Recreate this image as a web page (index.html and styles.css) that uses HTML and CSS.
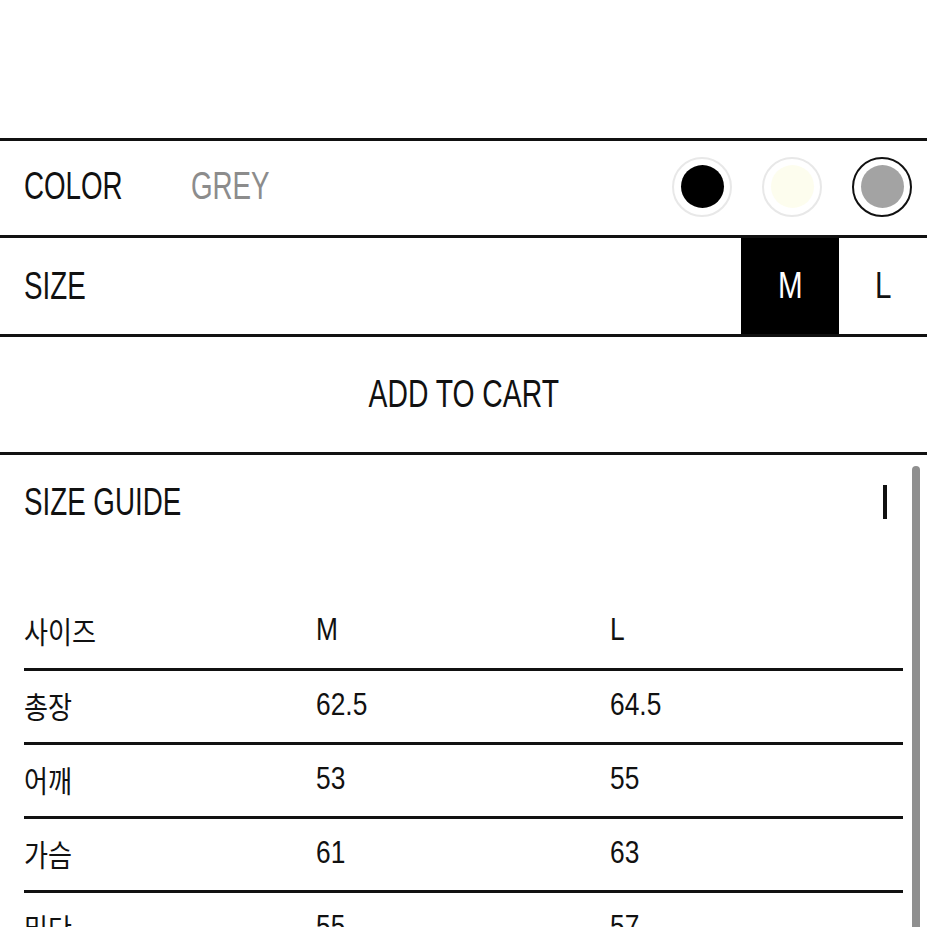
FILE: index.html
```html
<!DOCTYPE html>
<html lang="ko">
<head>
  <meta charset="UTF-8">
  <meta name="viewport" content="width=device-width, initial-scale=1.0">
  <title>Product Options</title>
  <link rel="stylesheet" href="styles.css">
</head>
<body>
  <div class="top-space"></div>

  <div class="options">
    <div class="option-row">
      <span class="label"><span class="narrow">COLOR</span></span>
      <span class="value"><span class="narrow">GREY</span></span>
      <div class="swatches">
        <button class="swatch"><span class="dot dot-black"></span></button>
        <button class="swatch"><span class="dot dot-cream"></span></button>
        <button class="swatch selected"><span class="dot dot-grey"></span></button>
      </div>
    </div>
    <div class="option-row size-row">
      <span class="label"><span class="narrow">SIZE</span></span>
      <div class="sizes">
        <button class="size active"><span class="narrow mid">M</span></button>
        <button class="size"><span class="narrow mid">L</span></button>
      </div>
    </div>
  </div>

  <button class="add-cart"><span class="narrow mid">ADD TO CART</span></button>

  <section class="guide">
    <div class="guide-head">
      <h2 class="guide-title"><span class="narrow">SIZE GUIDE</span></h2>
      <span class="toggle"></span>
    </div>
    <div class="guide-table">
      <div class="guide-row head">
        <span class="cell name">사이즈</span><span class="cell">M</span><span class="cell">L</span>
      </div>
      <div class="guide-row">
        <span class="cell name">총장</span><span class="cell">62.5</span><span class="cell">64.5</span>
      </div>
      <div class="guide-row">
        <span class="cell name">어깨</span><span class="cell">53</span><span class="cell">55</span>
      </div>
      <div class="guide-row">
        <span class="cell name">가슴</span><span class="cell">61</span><span class="cell">63</span>
      </div>
      <div class="guide-row">
        <span class="cell name">밑단</span><span class="cell">55</span><span class="cell">57</span>
      </div>
    </div>
  </section>

  <div class="scrollbar"></div>
</body>
</html>
```

FILE: styles.css
```css
/* Base */
* {
  box-sizing: border-box;
}

body {
  margin: 0;
  font-family: "Liberation Sans", "Noto Sans CJK KR", sans-serif;
  color: #111;
  background: #fff;
  overflow: hidden;
  position: relative;
}

button {
  font: inherit;
  color: inherit;
  cursor: pointer;
}

/* condensed look: no narrow face installed, so squeeze the text */
.narrow {
  display: inline-block;
  transform: scaleX(0.73);
  transform-origin: left center;
}

.narrow.mid {
  transform-origin: center;
}

.top-space {
  height: 138px;
}

/* Option rows */
.options {
  border-bottom: 3px solid #111;
}

.option-row {
  display: flex;
  align-items: center;
  height: 97px;
  padding-left: 24px;
  padding-bottom: 3px;
  border-top: 3px solid #111;
}

.option-row.size-row {
  height: 99px;
  padding-bottom: 0;
}

.label,
.value {
  font-size: 38px;
}

.label {
  width: 167px;
}

.value {
  color: #8c8c8c;
}

.swatches {
  margin-left: auto;
  display: flex;
  gap: 30px;
  padding-right: 15px;
}

.swatch {
  width: 60px;
  height: 60px;
  padding: 0;
  border-radius: 50%;
  border: 2px solid #e8e8e8;
  background: #fff;
  display: flex;
  align-items: center;
  justify-content: center;
}

.swatch.selected {
  border-color: #111;
}

.dot {
  width: 43px;
  height: 43px;
  border-radius: 50%;
}

.dot-black { background: #000; }
.dot-cream { background: #fdfdee; }
.dot-grey { background: #a3a3a3; }

.sizes {
  margin-left: auto;
  align-self: stretch;
  display: flex;
}

.size {
  width: 98px;
  padding: 0;
  border: 0;
  background: #fff;
  font-size: 37px;
}

.size .narrow {
  transform: scaleX(0.8);
}

.size:last-child {
  width: 88px;
}

.size.active {
  background: #000;
  color: #fff;
}

/* Add to cart */
.add-cart {
  display: block;
  width: 100%;
  height: 118px;
  border: 0;
  border-bottom: 3px solid #111;
  background: #fff;
  font-size: 38px;
}

.add-cart .narrow {
  transform: scaleX(0.745);
}

/* Size guide */
.guide-head {
  display: flex;
  align-items: center;
  justify-content: space-between;
  height: 94px;
  padding: 0 40px 0 24px;
}

.guide-title {
  margin: 0;
  font-size: 38px;
  font-weight: normal;
}

.toggle {
  width: 4px;
  height: 34px;
  background: #111;
}

.guide-table {
  margin: 46px 24px 0;
  width: 879px;
}

.guide-row {
  display: grid;
  grid-template-columns: 292px 294px 1fr;
  align-items: center;
  height: 74px;
  padding-bottom: 3px;
  border-top: 3px solid #111;
  font-size: 31px;
}

.guide-row.head {
  height: 73px;
  padding-bottom: 4px;
  border-top: 0;
}

.cell {
  justify-self: start;
  display: inline-block;
  transform: scaleX(0.85);
  transform-origin: left center;
}

.cell.name {
  font-family: "Noto Sans CJK KR", sans-serif;
  font-size: 30px;
  transform: scaleX(0.87);
}

.scrollbar {
  position: absolute;
  top: 466px;
  left: 912px;
  width: 8px;
  height: 480px;
  border-radius: 4px;
  background: #8f8f8f;
}
```
